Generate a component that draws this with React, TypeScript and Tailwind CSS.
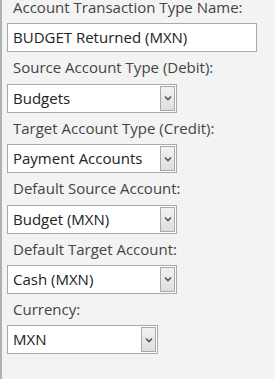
import React from 'react'

const fields = [
  { label: 'Account Transaction Type Name:', value: 'BUDGET Returned (MXN)', type: 'text', width: 'w-[250px]' },
  { label: 'Source Account Type (Debit):', value: 'Budgets', type: 'select', width: 'w-[170px]' },
  { label: 'Target Account Type (Credit):', value: 'Payment Accounts', type: 'select', width: 'w-[170px]' },
  { label: 'Default Source Account:', value: 'Budget (MXN)', type: 'select', width: 'w-[170px]' },
  { label: 'Default Target Account:', value: 'Cash (MXN)', type: 'select', width: 'w-[170px]' },
  { label: 'Currency:', value: 'MXN', type: 'select', width: 'w-[151px]' },
]

function Chevron() {
  return (
    <svg width="8" height="6" viewBox="0 0 8 6" className="block">
      <path d="M1 1.5 L4 4.5 L7 1.5" fill="none" stroke="#555" strokeWidth="1.6" />
    </svg>
  )
}

export default function App() {
  return (
    <div
      className="w-[275px] h-[379px] bg-[#f3f3f3] border-l-2 border-[#b0b0b0] overflow-hidden"
      style={{ fontFamily: '"Open Sans", "Noto Sans", sans-serif' }}
    >
      <div className="-mt-[8px] pl-[5px] flex flex-col">
        {fields.map((f) => (
          <div key={f.label} className="flex flex-col">
            {/* label */}
            <div className="mt-[4px] mb-[5.4px] h-[22px] leading-[22px] pl-[6px] text-[15px] text-[#444] whitespace-nowrap">
              {f.label}
            </div>

            {/* input / select */}
            <div
              className={`${f.width} h-[29px] bg-white border border-[#a9a9a9] flex items-center justify-between pl-[5px] pr-[1px]`}
            >
              <span className="text-[15px] text-[#222] whitespace-nowrap leading-none">{f.value}</span>
              {f.type === 'select' && (
                <div className="w-[15px] h-[25px] border border-[#a9a9a9] bg-gradient-to-b from-[#f2f2f2] to-[#dedede] flex items-center justify-center">
                  <Chevron />
                </div>
              )}
            </div>
          </div>
        ))}
      </div>
    </div>
  )
}
